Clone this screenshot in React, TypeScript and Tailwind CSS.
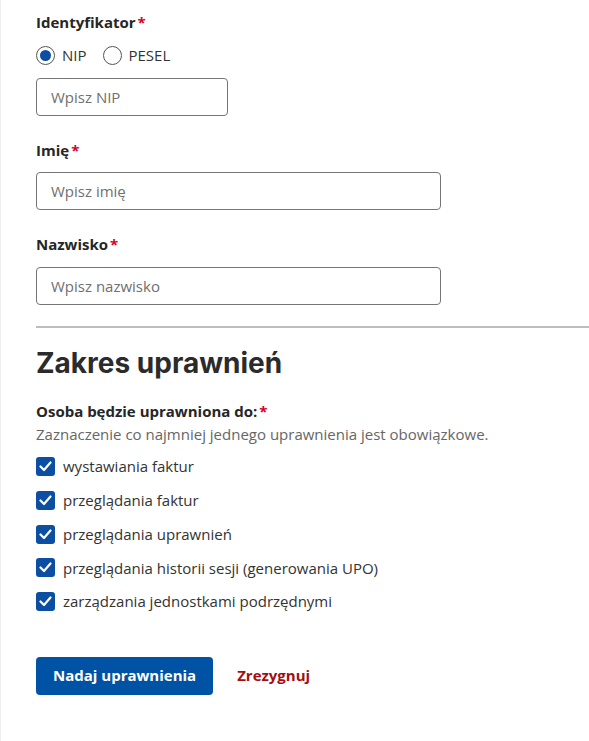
import { useState } from "react";

const permissions = [
  "wystawiania faktur",
  "przeglądania faktur",
  "przeglądania uprawnień",
  "przeglądania historii sesji (generowania UPO)",
  "zarządzania jednostkami podrzędnymi",
];

const Req = () => <span className="ml-[2px] text-[#d5002b]">*</span>;

const Label = ({ children }: { children: React.ReactNode }) => (
  <div className="text-[15px] font-bold leading-[20px] text-[#262626]">
    {children}
    <Req />
  </div>
);

const Radio = ({ checked, label, onClick }: { checked: boolean; label: string; onClick: () => void }) => (
  <button type="button" onClick={onClick} className="flex items-center gap-[7px]">
    <span className="flex h-[19px] w-[19px] items-center justify-center rounded-full border border-[#555] bg-white">
      {checked && <span className="h-[11px] w-[11px] rounded-full bg-[#0b4ea2]" />}
    </span>
    <span className="text-[15px] text-[#333]">{label}</span>
  </button>
);

export default function App() {
  const [idType, setIdType] = useState("NIP");
  const [checked, setChecked] = useState(permissions.map(() => true));

  return (
    <div
      className="min-h-[741px] w-[589px] overflow-hidden border-l border-[#efefef] bg-white pl-[35px] pt-[12px]"
      style={{ fontFamily: '"Open Sans", sans-serif' }}
    >
      <Label>Identyfikator</Label>
      <div className="mt-[12px] flex items-center gap-[16px]">
        <Radio checked={idType === "NIP"} label="NIP" onClick={() => setIdType("NIP")} />
        <Radio checked={idType === "PESEL"} label="PESEL" onClick={() => setIdType("PESEL")} />
      </div>
      <input
        placeholder="Wpisz NIP"
        className="mt-[11px] block h-[38px] w-[192px] rounded-[4px] border border-[#767676] px-[14px] text-[15px] text-[#333] placeholder:text-[#6f6f6f]"
      />

      <div className="mt-[24px]">
        <Label>Imię</Label>
      </div>
      <input
        placeholder="Wpisz imię"
        className="mt-[12px] block h-[38px] w-[405px] rounded-[4px] border border-[#767676] px-[14px] text-[15px] text-[#333] placeholder:text-[#6f6f6f]"
      />

      <div className="mt-[24px]">
        <Label>Nazwisko</Label>
      </div>
      <input
        placeholder="Wpisz nazwisko"
        className="mt-[13px] block h-[38px] w-[405px] rounded-[4px] border border-[#767676] px-[14px] text-[15px] text-[#333] placeholder:text-[#6f6f6f]"
      />

      <div className="mt-[21px] h-[2px] bg-[#bdbdbd]" />

      <h2
        className="mt-[17px] text-[28px] font-bold leading-[36px] text-[#2b2b2b]"
        style={{ fontFamily: "Inter, sans-serif" }}
      >
        Zakres uprawnień
      </h2>

      <div className="mt-[20px]">
        <Label>Osoba będzie uprawniona do:</Label>
      </div>
      <p className="mt-[3px] text-[15px] leading-[20px] text-[#666]">
        Zaznaczenie co najmniej jednego uprawnienia jest obowiązkowe.
      </p>

      <div className="mt-[13px] flex flex-col gap-[13.75px]">
        {permissions.map((p, i) => (
          <label key={p} className="flex h-[20px] cursor-pointer items-center gap-[8px]">
            <span
              onClick={() => setChecked(checked.map((c, j) => (j === i ? !c : c)))}
              className={`flex h-[19px] w-[19px] items-center justify-center rounded-[3px] ${
                checked[i] ? "bg-[#0b4ea2]" : "border border-[#555] bg-white"
              }`}
            >
              {checked[i] && (
                <svg width="13" height="11" viewBox="0 0 13 11" fill="none">
                  <path d="M1.5 5.5 L5 9 L11.5 1.5" stroke="white" strokeWidth="2.2" strokeLinecap="round" strokeLinejoin="round" />
                </svg>
              )}
            </span>
            <span className="text-[15px] text-[#333]">{p}</span>
          </label>
        ))}
      </div>

      <div className="mt-[45px] flex items-center gap-[24px]">
        <button className="h-[38px] rounded-[4px] bg-[#0052a5] px-[17px] text-[15px] font-bold text-white">
          Nadaj uprawnienia
        </button>
        <button className="text-[15px] font-bold text-[#a50e0e]">Zrezygnuj</button>
      </div>
    </div>
  );
}
